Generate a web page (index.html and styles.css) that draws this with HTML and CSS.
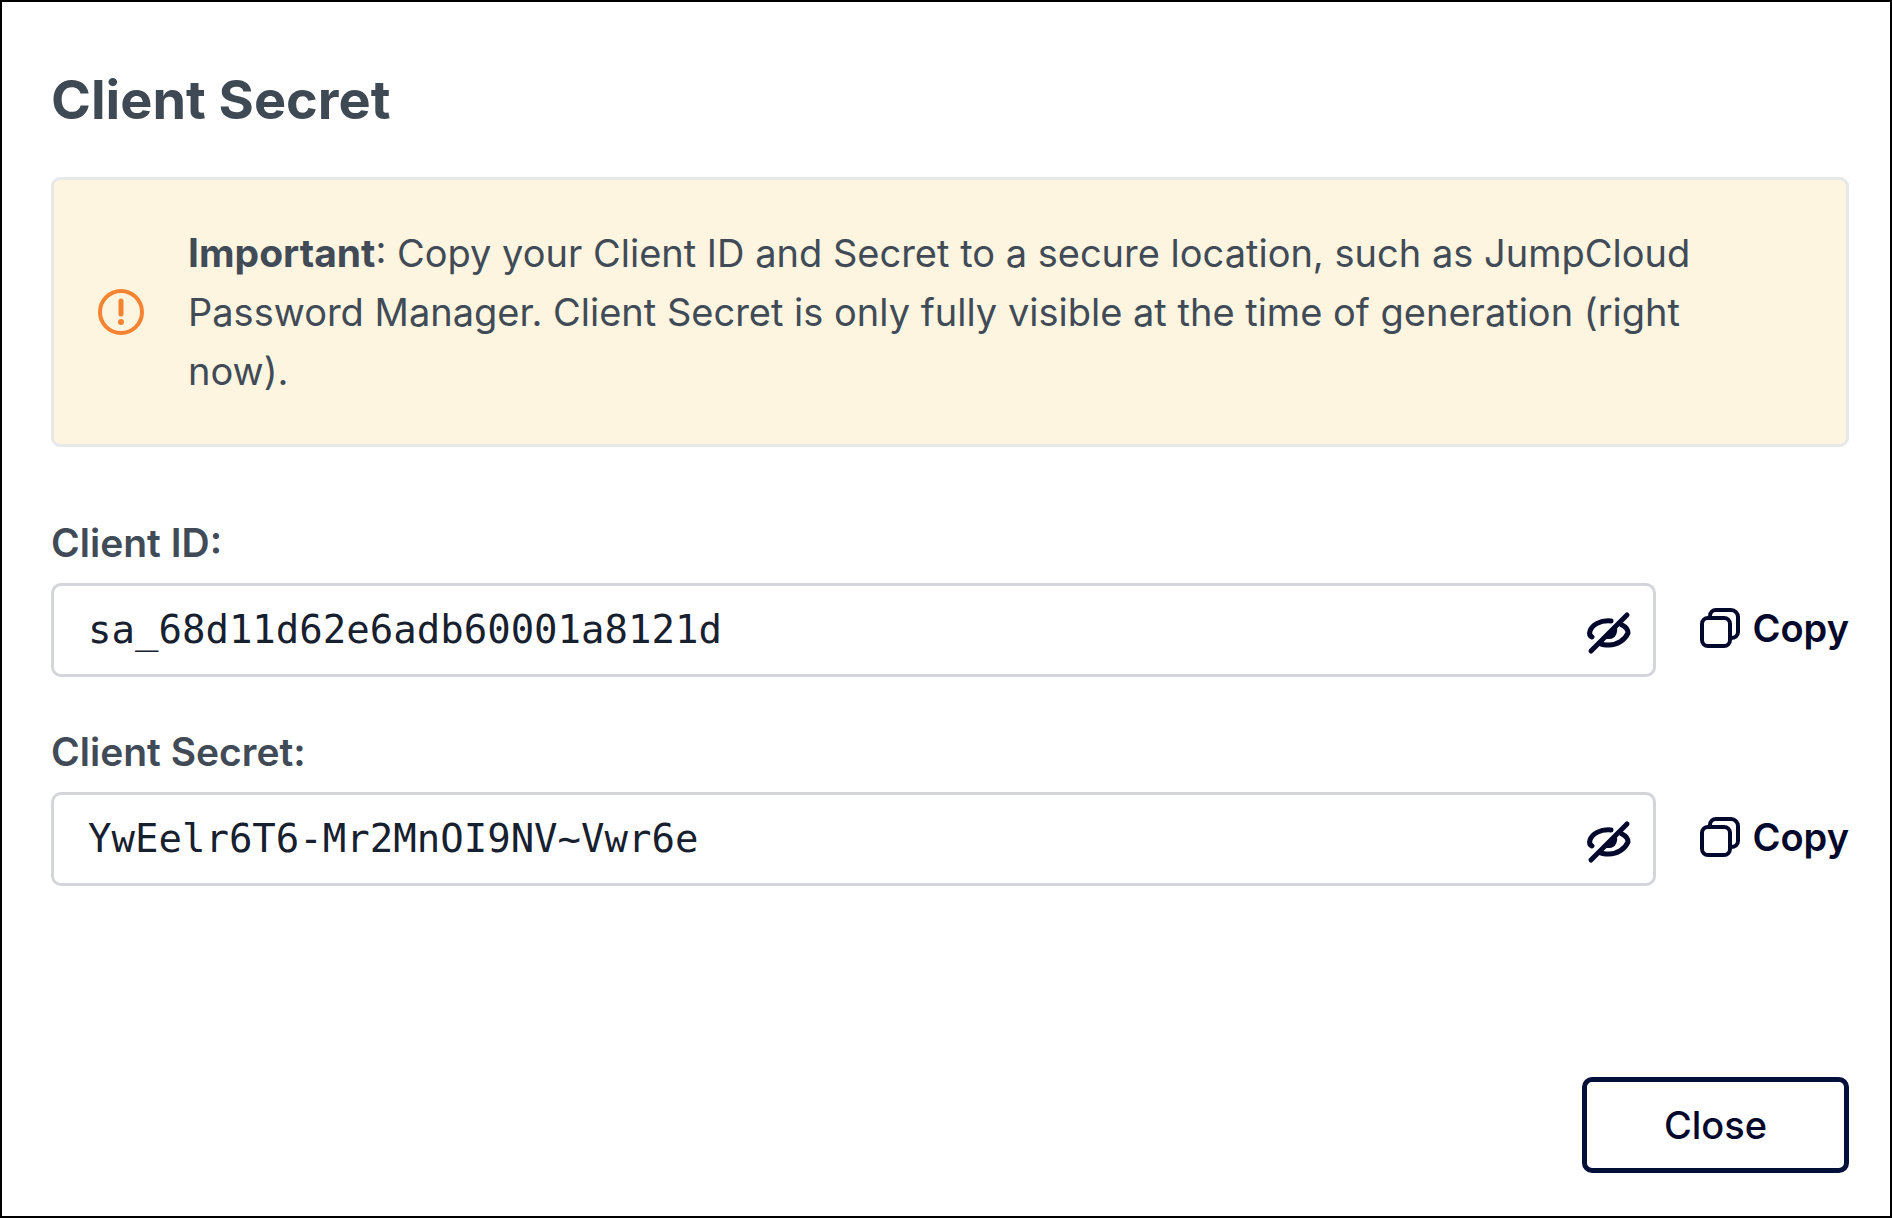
FILE: index.html
```html
<!DOCTYPE html>
<html lang="en">
<head>
<meta charset="utf-8">
<title>Client Secret</title>
<meta name="viewport" content="width=device-width, initial-scale=1">
<link rel="stylesheet" href="styles.css">
</head>
<body>
<svg class="sprite" aria-hidden="true">
  <symbol id="icon-hidden" viewBox="0 0 48 48">
    <path d="M26 13C15 12 7 17 5 23c-1 3 0 5 2 6" />
    <path d="M37 17c4 2 6 5 6 8-3 7-11 12-19 12-3 0-6 0-8-1" />
    <path class="fill" d="M31 17c3 6 0 14-7 14-3 0-5 0-7-1z" />
    <path d="M42 7 6 43" />
  </symbol>
  <symbol id="icon-copy" viewBox="0 0 40 40">
    <path d="M10 10V8a6 6 0 0 1 6-6h15a7 7 0 0 1 7 7v15c0 4-3 6-7 6" />
    <rect x="2" y="10" width="28" height="28" rx="6" />
  </symbol>
</svg>
<main class="dialog">
  <h1 class="title">Client Secret</h1>
  <div class="notice" role="note">
    <svg class="notice-icon" viewBox="0 0 46 46" aria-hidden="true">
      <circle class="ring" cx="23" cy="23" r="21" />
      <path class="bar" d="M23 12v13" />
      <circle class="dot" cx="23" cy="33" r="3" />
    </svg>
    <p class="notice-text"><strong class="notice-lead">Important</strong>: Copy your Client ID and Secret to a secure location, such as JumpCloud Password Manager. Client Secret is only fully visible at the time of generation (right now).</p>
  </div>
  <div class="field">
    <label class="label" for="client-id">Client ID:</label>
    <div class="row">
      <div class="box">
        <input class="input" id="client-id" type="text" value="sa_68d11d62e6adb60001a8121d" readonly>
        <button class="toggle" type="button" aria-label="Hide"><svg class="icon-hidden"><use href="#icon-hidden" /></svg></button>
      </div>
      <button class="copy" type="button"><svg class="icon-copy" aria-hidden="true"><use href="#icon-copy" /></svg>Copy</button>
    </div>
  </div>
  <div class="field">
    <label class="label" for="client-secret">Client Secret:</label>
    <div class="row">
      <div class="box">
        <input class="input" id="client-secret" type="text" value="YwEelr6T6-Mr2MnOI9NV~Vwr6e" readonly>
        <button class="toggle" type="button" aria-label="Hide"><svg class="icon-hidden"><use href="#icon-hidden" /></svg></button>
      </div>
      <button class="copy" type="button"><svg class="icon-copy" aria-hidden="true"><use href="#icon-copy" /></svg>Copy</button>
    </div>
  </div>
  <div class="actions">
    <button class="close" type="button">Close</button>
  </div>
</main>
</body>
</html>
```
FILE: styles.css
```css
* { box-sizing: border-box; }

body {
  margin: 0;
  background: #fff;
  color: #414b57;
  font-family: Inter, "Liberation Sans", sans-serif;
  font-size: 38px;
}

button {
  margin: 0;
  padding: 0;
  border: 0;
  background: none;
  color: #02082c;
  font: inherit;
}

svg { fill: none; flex: none; }

.sprite { position: absolute; width: 0; height: 0; }

.dialog {
  display: flex;
  flex-direction: column;
  min-height: 100vh;
  padding: 62px 41px 43px 49px;
  border: 2px solid #000;
}

.title {
  margin: 0 0 42px;
  color: #3f4954;
  font-size: 54px;
  font-weight: 700;
  line-height: 71px;
}

.notice {
  display: flex;
  align-items: center;
  gap: 44px;
  margin-bottom: 70px;
  padding: 43px 112px 43px 44px;
  border: 3px solid #e6e8ea;
  border-radius: 9px;
  background: #fdf5df;
}

.notice-icon { width: 46px; height: 46px; }
.ring { stroke: #f58331; stroke-width: 4; }
.bar { stroke: #f58331; stroke-width: 5; stroke-linecap: round; }
.dot { fill: #f58331; }

.notice-text { margin: 0; line-height: 59px; }
.notice-lead { font-size: 39px; }

.field { margin-bottom: 49px; }

.label {
  display: block;
  margin-bottom: 14px;
  font-size: 39px;
  font-weight: 600;
  line-height: 52px;
}

.row { display: flex; align-items: center; gap: 44px; }

.box {
  display: flex;
  flex: 1;
  align-items: center;
  height: 94px;
  padding-right: 20px;
  border: 3px solid #d3d5d8;
  border-radius: 10px;
}

.input {
  flex: 1;
  min-width: 0;
  height: 100%;
  padding: 0 0 2px 34px;
  border: 0;
  outline: 0;
  background: none;
  color: #17202f;
  font-family: "DejaVu Sans Mono", monospace;
  font-size: 39px;
}

.toggle { display: flex; margin-top: 4px; }

.icon-hidden { width: 48px; height: 48px; stroke: #02082c; stroke-width: 5; stroke-linecap: round; }
.fill { fill: #02082c; stroke: none; }
.icon-copy { width: 40px; height: 40px; stroke: #02082c; stroke-width: 4; stroke-linejoin: round; }

.copy { display: flex; align-items: center; gap: 12px; padding-bottom: 4px; font-weight: 600; }

.actions { display: flex; justify-content: flex-end; margin-top: auto; }

.close {
  width: 267px;
  height: 96px;
  border: 5px solid #02103a;
  border-radius: 10px;
  font-weight: 500;
}
```
